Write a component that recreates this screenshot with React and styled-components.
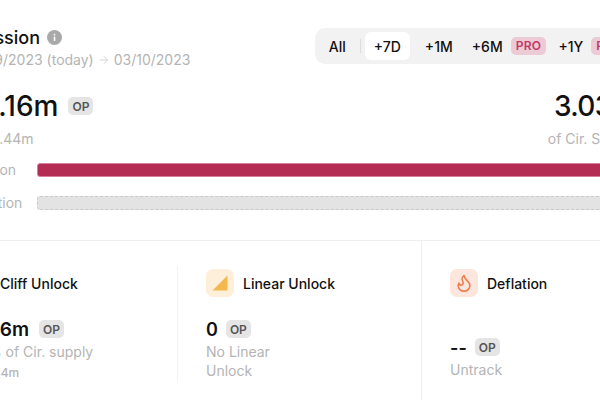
import React from 'react'
import styled, { createGlobalStyle } from 'styled-components'
import { ArrowRight, Flame } from 'lucide-react'

const Global = createGlobalStyle`
  html, body {
    margin: 0;
    height: 400px;
    overflow: hidden;
    background: #fff;
  }
  body {
    font-family: Inter, "Liberation Sans", sans-serif;
    color: #111;
  }
`
const Page = styled.main`
  width: 700px;
  margin-left: -37px;
`
const Top = styled.section`
  width: 674px;
  padding-top: 28px;
  height: 240px;
  box-sizing: border-box;
`
const HeadRow = styled.div`
  display: flex;
  justify-content: space-between;
  align-items: flex-start;
`
const TitleRow = styled.div`
  display: flex;
  align-items: center;
  gap: 7px;
  height: 18px;
  font-size: 18px;
  font-weight: 500;
`
const DateRow = styled.div`
  display: flex;
  align-items: center;
  gap: 4px;
  margin-top: 4px;
  font-size: 14px;
  line-height: 20px;
  color: #b4b4b4;
`
const Tabs = styled.nav`
  display: flex;
  align-items: center;
  height: 36px;
  padding: 0 10px 0 14px;
  background: #f2f2f2;
  border-radius: 10px;
  font-size: 14px;
  font-weight: 500;
`
const Sep = styled.span`
  width: 1px;
  height: 14px;
  margin: 0 4px 0 14px;
  background: #dcdcdc;
`
const Tab = styled.span`
  display: flex;
  align-items: center;
  justify-content: center;
  height: 28px;
  border-radius: 6px;
  margin-left: ${(p) => p.$gap || 0}px;
  width: ${(p) => (p.$active ? '45px' : 'auto')};
  background: ${(p) => (p.$active ? '#fff' : 'transparent')};
`
const Pro = styled.span`
  margin-left: 8px;
  padding: 0 5px;
  line-height: 18px;
  border-radius: 5px;
  background: #eccbd6;
  color: #c23a68;
  font-size: 12px;
  font-weight: 600;
  letter-spacing: 0.3px;
`
const ValueRow = styled.div`
  display: flex;
  justify-content: space-between;
  margin-top: 19px;
`
const ValueLine = styled.div`
  display: flex;
  align-items: center;
  gap: 10px;
  height: 34px;
  font-size: 28px;
  font-weight: 500;
`
const RightCol = styled.div`
  text-align: right;
  ${ValueLine} {
    justify-content: flex-end;
    margin-right: -2px;
    letter-spacing: -0.6px;
  }
`
const Sub = styled.div`
  margin-top: 6px;
  font-size: 14px;
  line-height: 20px;
  color: #b4b4b4;
`
const Badge = styled.span`
  display: inline-flex;
  align-items: center;
  justify-content: center;
  width: 25px;
  height: 18px;
  border-radius: 5px;
  background: #e5e5e5;
  color: #555;
  font-size: 12px;
  font-weight: 600;
`
const Bars = styled.div`
  display: grid;
  grid-template-columns: 74px 1fr;
  row-gap: 16px;
  margin-top: 12px;
  align-items: center;
`
const BarLabel = styled.span`
  font-size: 14px;
  color: #b4b4b4;
`
const Bar = styled.div`
  height: 14px;
  box-sizing: border-box;
  border-radius: 3px;
  background: ${(p) => (p.$dashed ? '#e3e3e3' : '#b42b54')};
  border: 1px ${(p) => (p.$dashed ? 'dashed #c9c9c9' : 'solid #d87e98')};
`
const Stats = styled.section`
  display: flex;
  height: 160px;
  border-top: 1px solid #eee;
`
const Stat = styled.div`
  display: flex;
  flex-direction: column;
  box-sizing: border-box;
  width: ${(p) => p.$w}px;
  padding: 28px 0 0 ${(p) => p.$pad || 0}px;
`
const StatLeft = styled(Stat)`
  position: relative;
  &::after {
    content: '';
    position: absolute;
    right: 0;
    top: 25px;
    bottom: 18px;
    width: 1px;
    background: #f3f3f3;
  }
`
const StatRight = styled(Stat)`
  border-left: 1px solid #eee;
`
const StatHead = styled.div`
  display: flex;
  align-items: center;
  gap: 9px;
  font-size: 14px;
  font-weight: 500;
`
const IconBox = styled.span`
  display: flex;
  align-items: center;
  justify-content: center;
  width: 28px;
  height: 28px;
  border-radius: 7px;
  background: ${(p) => p.$bg};
  color: ${(p) => p.$fg};
`
const StatBody = styled.div`
  display: flex;
  flex-direction: column;
  margin-top: auto;
  height: ${(p) => p.$h}px;
  padding-bottom: 20px;
`
const StatValue = styled.div`
  display: flex;
  align-items: center;
  gap: ${(p) => (p.$big ? 10 : 8)}px;
  height: 20px;
  font-size: ${(p) => (p.$big ? 19 : 18)}px;
  font-weight: 600;
`
const StatSub = styled.div`
  margin-top: 3px;
  max-width: ${(p) => p.$max || 200}px;
  font-size: 14px;
  line-height: 19px;
  color: #b4b4b4;
`
const StatFoot = styled.div`
  margin-top: 4px;
  font-size: 12px;
  font-weight: 500;
  color: #b4b4b4;
`

const Info = () => (
  <svg width="15" height="15" viewBox="0 0 15 15">
    <circle cx="7.5" cy="7.5" r="7.5" fill="#a9a9a9" />
    <rect x="6.8" y="6.6" width="1.5" height="4.4" rx="0.6" fill="#fff" />
    <circle cx="7.5" cy="4.6" r="0.9" fill="#fff" />
  </svg>
)
const Ramp = () => (
  <svg width="16" height="16" viewBox="0 0 16 16">
    <path d="M0.5 15.5 L15.5 0.5 V15.5 Z" fill="#f5b84f" />
  </svg>
)
const Step = () => (
  <svg width="16" height="16" viewBox="0 0 16 16">
    <path d="M1 15 V10 H8 V2 H15 V15 Z" fill="#c23a68" />
  </svg>
)

const App = () => (
  <Page>
    <Global />
    <Top>
      <HeadRow>
        <div>
          <TitleRow>
            Emission <Info />
          </TitleRow>
          <DateRow>
            03/09/2023 (today) <ArrowRight size={12} color="#d4d4d4" /> 03/10/2023
          </DateRow>
        </div>
        <Tabs>
          <Tab>All</Tab>
          <Sep />
          <Tab $active>+7D</Tab>
          <Tab $gap={15}>+1M</Tab>
          <Tab $gap={19}>+6M</Tab>
          <Pro>PRO</Pro>
          <Tab $gap={12}>+1Y</Tab>
          <Pro>PRO</Pro>
        </Tabs>
      </HeadRow>
      <ValueRow>
        <div>
          <ValueLine>
            43.16m <Badge>OP</Badge>
          </ValueLine>
          <Sub>≈ $13.44m</Sub>
        </div>
        <RightCol>
          <ValueLine>3.03%</ValueLine>
          <Sub>of Cir. Supply</Sub>
        </RightCol>
      </ValueRow>
      <Bars>
        <BarLabel>Inflation</BarLabel>
        <Bar />
        <BarLabel>Deflation</BarLabel>
        <Bar $dashed />
      </Bars>
    </Top>
    <Stats>
      <StatLeft $w={215}>
        <StatHead>
          <IconBox $bg="#f7dfe7">
            <Step />
          </IconBox>
          Cliff Unlock
        </StatHead>
        <StatBody $h={62}>
          <StatValue $big>
            43.16m <Badge>OP</Badge>
          </StatValue>
          <StatSub>0.17% of Cir. supply</StatSub>
          <StatFoot>≈ $3.44m</StatFoot>
        </StatBody>
      </StatLeft>
      <Stat $w={243} $pad={28}>
        <StatHead>
          <IconBox $bg="#fdefd9">
            <Ramp />
          </IconBox>
          Linear Unlock
        </StatHead>
        <StatBody $h={62}>
          <StatValue>
            0 <Badge>OP</Badge>
          </StatValue>
          <StatSub $max={90}>No Linear Unlock</StatSub>
        </StatBody>
      </Stat>
      <StatRight $w={215} $pad={28}>
        <StatHead>
          <IconBox $bg="#fde6dd" $fg="#f07a48">
            <Flame size={20} strokeWidth={1.8} />
          </IconBox>
          Deflation
        </StatHead>
        <StatBody $h={44}>
          <StatValue>
            -- <Badge>OP</Badge>
          </StatValue>
          <StatSub>Untrack</StatSub>
        </StatBody>
      </StatRight>
    </Stats>
  </Page>
)

export default App
